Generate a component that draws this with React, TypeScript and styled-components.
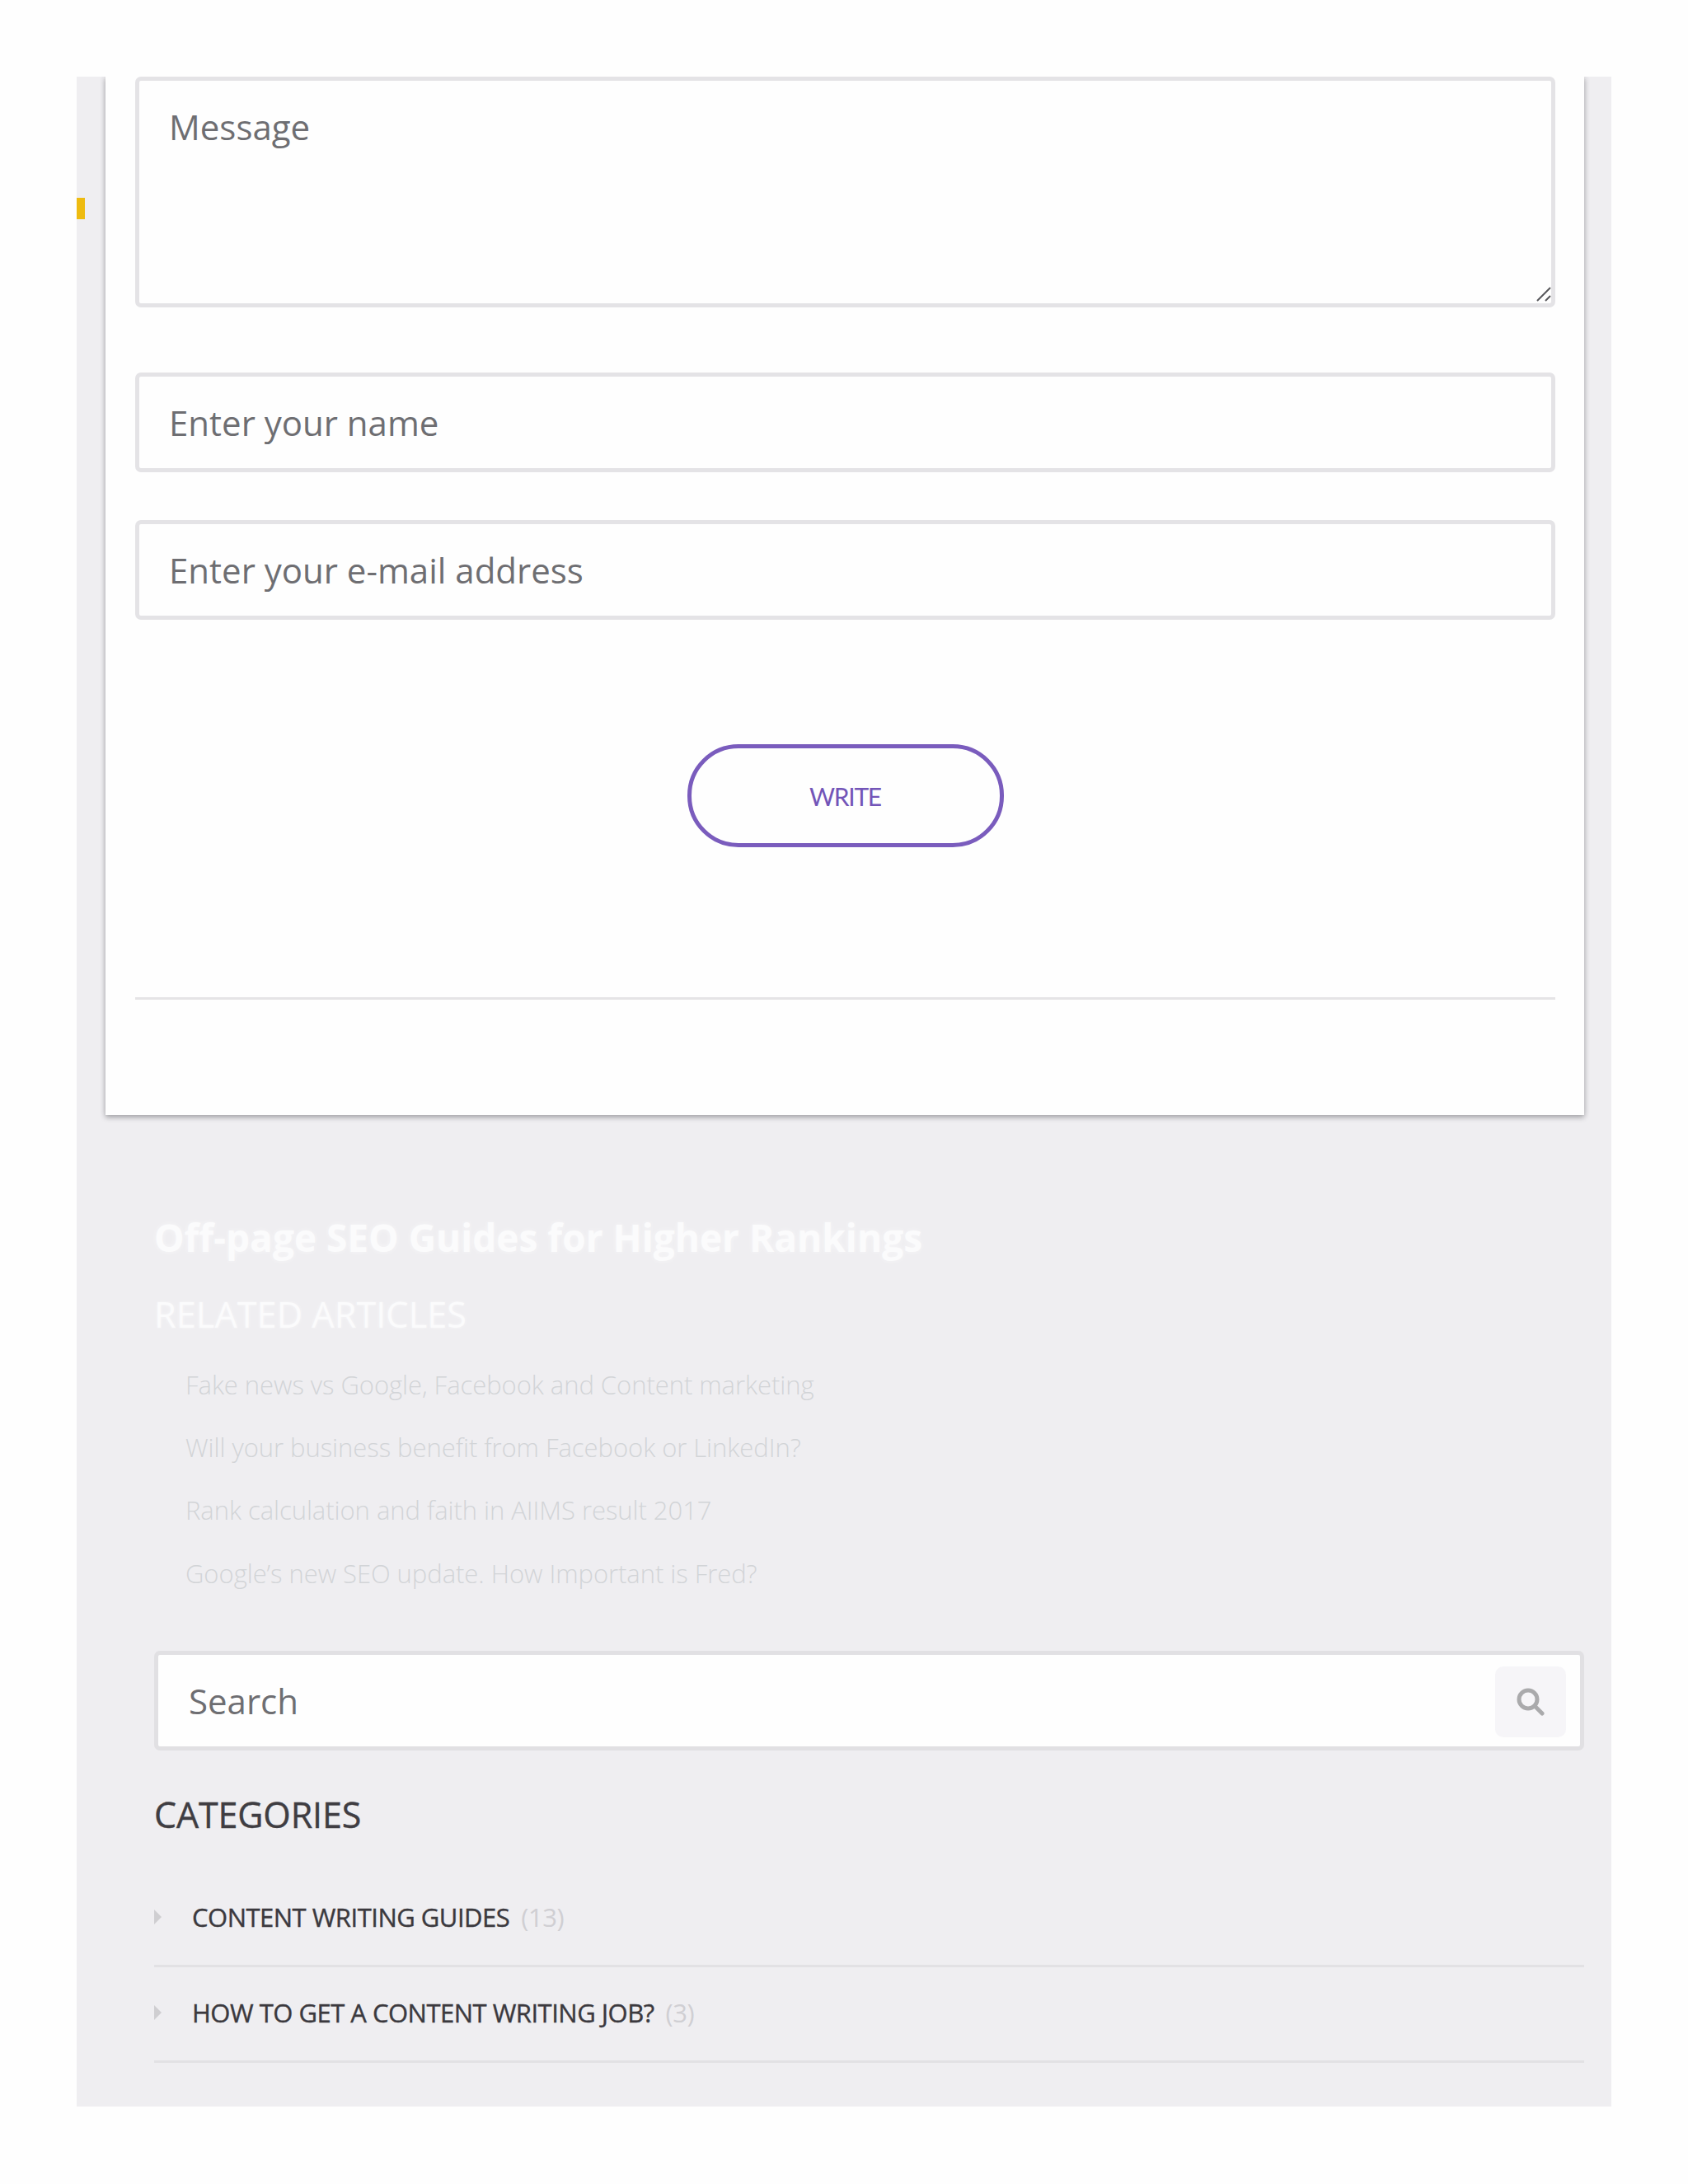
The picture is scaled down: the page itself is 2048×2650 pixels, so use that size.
import React from "react";
import styled, { createGlobalStyle } from "styled-components";

const GlobalStyle = createGlobalStyle`
  html, body {
    margin: 0;
    padding: 0;
    background: #fefefe;
    font-family: "Open Sans", "Liberation Sans", sans-serif;
  }
  * {
    box-sizing: border-box;
  }
`;

const Page = styled.div`
  width: 2048px;
  height: 2650px;
  padding: 93px 93px 0;
`;

const Panel = styled.main`
  position: relative;
  width: 1862px;
  height: 2463px;
  background: #efeef1;
  overflow: hidden;
`;

const Marker = styled.span`
  position: absolute;
  left: 0;
  top: 147px;
  width: 10px;
  height: 26px;
  background: #eebb10;
`;

const Card = styled.section`
  margin: 0 33px 0 35px;
  height: 1260px;
  padding: 0 35px 0 36px;
  background: #fefefe;
  box-shadow: 0 3px 6px rgba(60, 60, 65, 0.35), 0 0 7px rgba(60, 60, 65, 0.16);
  display: flex;
  flex-direction: column;
`;

const fieldStyle = `
  display: block;
  width: 100%;
  border: 5px solid #e4e3e6;
  border-radius: 7px;
  background: #fefefe;
  padding: 0 36px;
  font-family: "Open Sans", "Liberation Sans", sans-serif;
  font-size: 42px;
  color: #6e6e72;
  outline: none;

  &::placeholder {
    color: #6e6e72;
    opacity: 1;
  }
`;

const MessageWrap = styled.div`
  position: relative;
  height: 280px;
  margin-bottom: 79px;
`;

const MessageField = styled.textarea`
  ${fieldStyle}
  height: 100%;
  padding-top: 26px;
  line-height: 60px;
  resize: none;
`;

const ResizeGrip = styled.svg`
  position: absolute;
  right: 5px;
  bottom: 7px;
`;

const TextField = styled.input<{ $gap: number }>`
  ${fieldStyle}
  height: 121px;
  margin-bottom: ${({ $gap }) => $gap}px;
`;

const WriteButton = styled.button`
  align-self: center;
  width: 384px;
  height: 125px;
  border: 5px solid #7a5cbd;
  border-radius: 62px;
  background: transparent;
  color: #7355b8;
  font-family: Lato, "Open Sans", sans-serif;
  font-size: 30px;
  letter-spacing: -1.3px;
  cursor: pointer;
`;

const Divider = styled.hr`
  width: 100%;
  height: 3px;
  margin: 182px 0 0;
  border: 0;
  background: #e5e4e6;
`;

const Sidebar = styled.aside`
  padding: 118px 33px 0 94px;
`;

const ArticleTitle = styled.h2`
  margin: 0 0 39px;
  font-size: 46px;
  line-height: 60px;
  font-weight: 700;
  color: #fbfbfc;
  text-shadow: 0 0 6px rgba(255, 255, 255, 0.5);
`;

const RelatedTitle = styled.h3`
  margin: 0 0 22px;
  font-size: 43.3px;
  line-height: 50px;
  font-weight: 400;
  color: #fbfbfc;
  text-shadow: 0 0 4px rgba(255, 255, 255, 0.5);
`;

const RelatedList = styled.ul`
  list-style: none;
  margin: 0 0 56px;
  padding: 0 0 0 38px;
`;

const RelatedItem = styled.li`
  font-size: 31px;
  line-height: 76.2px;
  font-weight: 300;
  letter-spacing: -0.05px;
  color: #d2d4d7;
`;

const SearchBox = styled.form`
  display: flex;
  align-items: center;
  justify-content: space-between;
  height: 121px;
  padding: 0 17px 0 37px;
  background: #fefefe;
  border: 5px solid #e1e0e3;
  border-radius: 7px;
  margin-bottom: 48px;
`;

const SearchInput = styled.input`
  flex: 1;
  min-width: 0;
  border: 0;
  padding: 0;
  background: transparent;
  outline: none;
  font-family: "Open Sans", "Liberation Sans", sans-serif;
  font-size: 42px;
  color: #6e6e72;

  &::placeholder {
    color: #6e6e72;
    opacity: 1;
  }
`;

const SearchButton = styled.button`
  display: flex;
  align-items: center;
  justify-content: center;
  width: 86px;
  height: 86px;
  margin-top: 3px;
  border: 0;
  border-radius: 10px;
  background: #f6f5f8;
  padding: 0;
`;

const CategoriesTitle = styled.h3`
  margin: 0 0 39px;
  font-size: 43px;
  line-height: 60px;
  font-weight: 400;
  letter-spacing: -0.15px;
  -webkit-text-stroke: 0.4px #3f3d42;
  color: #3f3d42;
`;

const CategoryRow = styled.div`
  display: flex;
  align-items: center;
  height: 116px;
  padding-bottom: 3px;
  border-bottom: 3px solid #e2e1e4;
`;

const Arrow = styled.span`
  width: 0;
  height: 0;
  margin-right: 37px;
  border-style: solid;
  border-width: 9px 0 9px 9px;
  border-color: transparent transparent transparent #cfced1;
`;

const CategoryName = styled.a`
  font-size: 31px;
  font-weight: 400;
  letter-spacing: -0.5px;
  -webkit-text-stroke: 0.4px #3b393e;
  color: #3b393e;
`;

const CategoryCount = styled.span`
  margin-left: 14px;
  font-size: 31px;
  font-weight: 400;
  letter-spacing: -0.5px;
  color: #d0cfd3;
`;

const related = [
  "Fake news vs Google, Facebook and Content marketing",
  "Will your business benefit from Facebook or LinkedIn?",
  "Rank calculation and faith in AIIMS result 2017",
  "Google’s new SEO update. How Important is Fred?",
];

const categories = [
  { name: "CONTENT WRITING GUIDES", count: 13 },
  { name: "HOW TO GET A CONTENT WRITING JOB?", count: 3 },
];

function App() {
  return (
    <Page>
      <GlobalStyle />
      <Panel>
        <Marker />
        <Card>
          <MessageWrap>
            <MessageField placeholder="Message" />
            <ResizeGrip width="18" height="18" viewBox="0 0 18 18" fill="none">
              <path d="M1 17 L17 1 M11 17 L17 11" stroke="#56565a" strokeWidth="2" />
            </ResizeGrip>
          </MessageWrap>
          <TextField $gap={58} placeholder="Enter your name" />
          <TextField $gap={151} placeholder="Enter your e-mail address" />
          <WriteButton type="button">WRITE</WriteButton>
          <Divider />
        </Card>
        <Sidebar>
          <ArticleTitle>Off-page SEO Guides for Higher Rankings</ArticleTitle>
          <RelatedTitle>RELATED ARTICLES</RelatedTitle>
          <RelatedList>
            {related.map((title) => (
              <RelatedItem key={title}>{title}</RelatedItem>
            ))}
          </RelatedList>
          <SearchBox>
            <SearchInput placeholder="Search" />
            <SearchButton type="button" aria-label="Search">
              <svg width="34" height="34" viewBox="0 0 34 34" fill="none">
                <circle cx="14" cy="14" r="11" stroke="#aaaaac" strokeWidth="5" />
                <path d="M22 22 L31 31" stroke="#aaaaac" strokeWidth="5" strokeLinecap="round" />
              </svg>
            </SearchButton>
          </SearchBox>
          <CategoriesTitle>CATEGORIES</CategoriesTitle>
          {categories.map((category) => (
            <CategoryRow key={category.name}>
              <Arrow />
              <CategoryName>{category.name}</CategoryName>
              <CategoryCount>({category.count})</CategoryCount>
            </CategoryRow>
          ))}
        </Sidebar>
      </Panel>
    </Page>
  );
}

export default App;
